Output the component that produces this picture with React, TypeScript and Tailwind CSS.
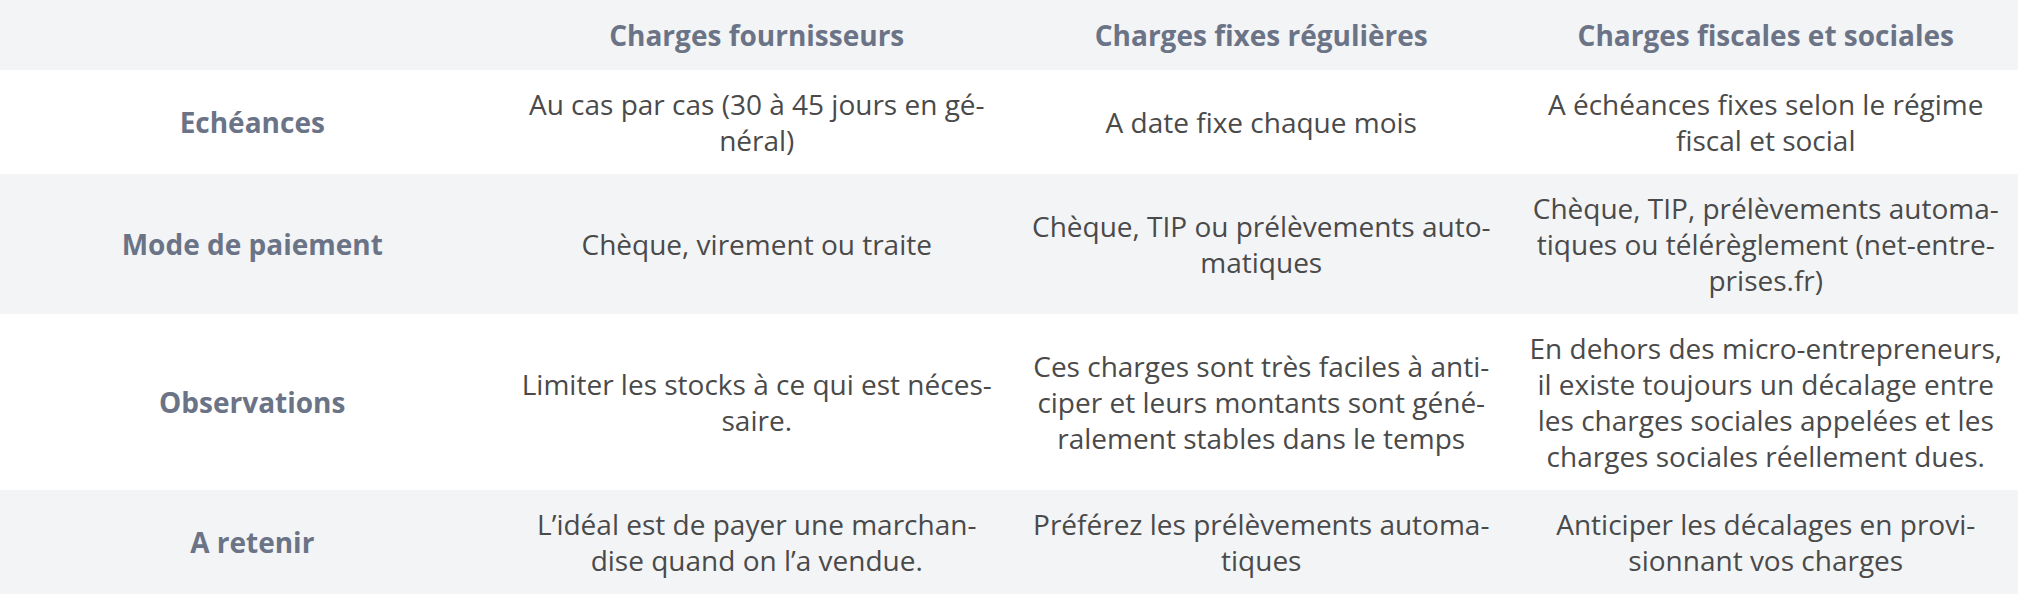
import React from "react";

type Row = { label: string; cells: string[][]; bg: string };

const rows: Row[] = [
  {
    label: "Echéances",
    bg: "bg-white",
    cells: [
      ["Au cas par cas (30 à 45 jours en gé-", "néral)"],
      ["A date fixe chaque mois"],
      ["A échéances fixes selon le régime", "fiscal et social"],
    ],
  },
  {
    label: "Mode de paiement",
    bg: "bg-[#f3f4f6]",
    cells: [
      ["Chèque, virement ou traite"],
      ["Chèque, TIP ou prélèvements auto-", "matiques"],
      [
        "Chèque, TIP, prélèvements automa-",
        "tiques ou télérèglement (net-entre-",
        "prises.fr)",
      ],
    ],
  },
  {
    label: "Observations",
    bg: "bg-white",
    cells: [
      ["Limiter les stocks à ce qui est néces-", "saire."],
      [
        "Ces charges sont très faciles à anti-",
        "ciper et leurs montants sont géné-",
        "ralement stables dans le temps",
      ],
      [
        "En dehors des micro-entrepreneurs,",
        "il existe toujours un décalage entre",
        "les charges sociales appelées et les",
        "charges sociales réellement dues.",
      ],
    ],
  },
  {
    label: "A retenir",
    bg: "bg-[#f3f4f6]",
    cells: [
      ["L’idéal est de payer une marchan-", "dise quand on l’a vendue."],
      ["Préférez les prélèvements automa-", "tiques"],
      ["Anticiper les décalages en provi-", "sionnant vos charges"],
    ],
  },
];

const headers = [
  "",
  "Charges fournisseurs",
  "Charges fixes régulières",
  "Charges fiscales et sociales",
];

export default function App() {
  return (
    <div
      className="w-[2018px] h-[598px] overflow-hidden bg-white text-[28px] leading-[36px]"
      style={{ fontFamily: '"Open Sans", "Noto Sans", sans-serif' }}
    >
      <div className="grid grid-cols-4 bg-[#f3f4f6] py-[17px]">
        {headers.map((h, i) => (
          <div
            key={i}
            className="text-center font-bold text-[#6b7386] px-4 whitespace-nowrap"
          >
            {h}
          </div>
        ))}
      </div>
      {rows.map((r, ri) => (
        <div key={ri} className={`grid grid-cols-4 items-center py-4 ${r.bg}`}>
          <div className="text-center font-bold text-[#6b7386] px-4">
            {r.label}
          </div>
          {r.cells.map((lines, ci) => (
            <div key={ci} className="text-center text-[#4a4a4a] px-4">
              {lines.map((l, li) => (
                <div key={li} className="whitespace-nowrap">
                  {l}
                </div>
              ))}
            </div>
          ))}
        </div>
      ))}
    </div>
  );
}
